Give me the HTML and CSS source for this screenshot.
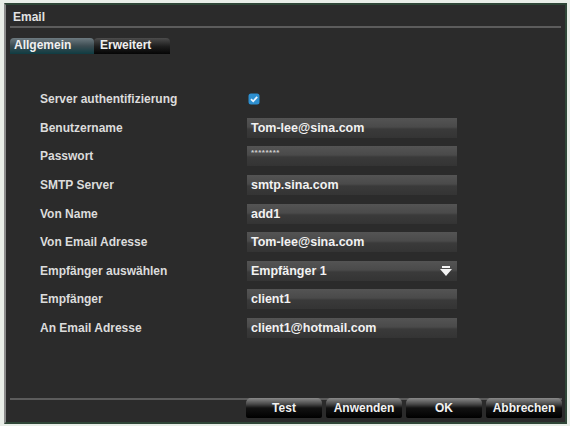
FILE: index.html
```html
<!DOCTYPE html>
<html lang="de">
<head>
    <meta charset="UTF-8">
    <title>Email</title>
    <link rel="stylesheet" href="styles.css">
</head>
<body>
    <div class="window">
        <div class="title">Email</div>
        <div class="rule"></div>

        <div class="tabs">
            <div class="tab active">Allgemein</div>
            <div class="tab">Erweitert</div>
        </div>

        <div class="form">
            <div class="row">
                <span class="label">Server authentifizierung</span>
                <span class="check">
                    <svg width="12" height="12" viewBox="0 0 12 12"><rect x="0.5" y="0.5" width="11" height="11" rx="2.5" fill="#2d8fd0"/><path d="M3 6.2 L5.2 8.3 L9.2 3.8" stroke="#e8f4ff" stroke-width="1.8" fill="none"/></svg>
                </span>
            </div>
            <div class="row">
                <span class="label">Benutzername</span>
                <span class="field">Tom-lee@sina.com</span>
            </div>
            <div class="row">
                <span class="label">Passwort</span>
                <span class="field pass">********</span>
            </div>
            <div class="row">
                <span class="label">SMTP Server</span>
                <span class="field">smtp.sina.com</span>
            </div>
            <div class="row">
                <span class="label">Von Name</span>
                <span class="field">add1</span>
            </div>
            <div class="row">
                <span class="label">Von Email Adresse</span>
                <span class="field">Tom-lee@sina.com</span>
            </div>
            <div class="row">
                <span class="label">Empfänger auswählen</span>
                <span class="field select">Empfänger 1
                    <svg class="arrow" width="12" height="11" viewBox="0 0 12 11"><rect x="2" y="0" width="8" height="2" fill="#f4f4f4"/><path d="M0 3 H12 L6 10 Z" fill="#f4f4f4"/></svg>
                </span>
            </div>
            <div class="row">
                <span class="label">Empfänger</span>
                <span class="field">client1</span>
            </div>
            <div class="row">
                <span class="label">An Email Adresse</span>
                <span class="field">client1@hotmail.com</span>
            </div>
        </div>

        <div class="footer">
            <div class="btn">Test</div>
            <div class="btn">Anwenden</div>
            <div class="btn">OK</div>
            <div class="btn">Abbrechen</div>
        </div>
    </div>
</body>
</html>
```

FILE: styles.css
```css
html, body {
    margin: 0;
    padding: 0;
}
body {
    background: #e9eee8;
    font-family: "Liberation Sans", Arial, sans-serif;
    font-weight: bold;
    font-size: 12px;
    color: #e2e2e2;
    width: 570px;
    height: 426px;
    overflow: hidden;
}
.window {
    margin: 3px 3px 0 4px;
    height: 417px;
    background: #2b2b2b;
    border: 2px solid #2f4637;
    border-left: 2px solid #8c8c8c;
    display: flex;
    flex-direction: column;
}
.title {
    height: 17px;
    padding: 4px 0 0 7px;
    line-height: 16px;
}
.rule {
    height: 2px;
    background: #5c5c5c;
    margin: 0 4px 0 4px;
}
.tabs {
    display: flex;
    margin: 10px 0 0 4px;
    height: 16px;
}
.tab {
    width: 70px;
    line-height: 15px;
    padding-left: 6px;
    border-radius: 4px 4px 0 0;
    background: linear-gradient(#4c4c4c, #1c1c1c 55%, #050505);
    color: #f0f0f0;
}
.tab.active {
    width: 80px;
    padding-left: 4px;
    background: linear-gradient(#6d7a80, #3c4c52 50%, #0f3c42);
}
.form {
    margin-top: 31px;
}
.row {
    display: flex;
    align-items: center;
    height: 28.6px;
}
.label {
    width: 207px;
    padding-left: 34px;
    color: #dcdcdc;
}
.check {
    display: flex;
    padding-left: 1px;
}
.field {
    position: relative;
    width: 206px;
    height: 20px;
    line-height: 20px;
    padding-left: 4px;
    background: linear-gradient(#545454, #4a4a4a 45%, #3a3a3a 55%, #343434);
    color: #f2f2f2;
    font-size: 12.5px;
}
.field.pass {
    font-size: 8px;
    line-height: 14px;
    letter-spacing: 0.5px;
    color: #cfcfcf;
}
.arrow {
    position: absolute;
    right: 5px;
    top: 5px;
}
.footer {
    margin: auto 3px 4px 4px;
    border-top: 2px solid #5c5c5c;
    display: flex;
    justify-content: flex-end;
    gap: 4px;
}
.btn {
    width: 76px;
    height: 20px;
    margin-top: -2px;
    line-height: 21px;
    text-align: center;
    border-radius: 5px 5px 2px 2px;
    background: linear-gradient(#8a8a8a, #4a4a4a 30%, #121212 50%, #000);
    color: #f2f2f2;
}
```
